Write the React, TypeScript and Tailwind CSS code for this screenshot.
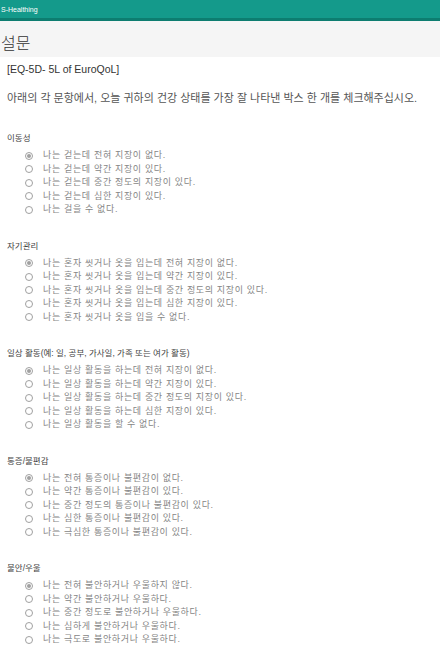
import React from "react";

interface Section {
  title: string;
  options: string[];
}

const sections: Section[] = [
  {
    title: "이동성",
    options: [
      "나는 걷는데 전혀 지장이 없다.",
      "나는 걷는데 약간 지장이 있다.",
      "나는 걷는데 중간 정도의 지장이 있다.",
      "나는 걷는데 심한 지장이 있다.",
      "나는 걸을 수 없다.",
    ],
  },
  {
    title: "자기관리",
    options: [
      "나는 혼자 씻거나 옷을 입는데 전혀 지장이 없다.",
      "나는 혼자 씻거나 옷을 입는데 약간 지장이 있다.",
      "나는 혼자 씻거나 옷을 입는데 중간 정도의 지장이 있다.",
      "나는 혼자 씻거나 옷을 입는데 심한 지장이 있다.",
      "나는 혼자 씻거나 옷을 입을 수 없다.",
    ],
  },
  {
    title: "일상 활동(예: 일, 공부, 가사일, 가족 또는 여가 활동)",
    options: [
      "나는 일상 활동을 하는데 전혀 지장이 없다.",
      "나는 일상 활동을 하는데 약간 지장이 있다.",
      "나는 일상 활동을 하는데 중간 정도의 지장이 있다.",
      "나는 일상 활동을 하는데 심한 지장이 있다.",
      "나는 일상 활동을 할 수 없다.",
    ],
  },
  {
    title: "통증/불편감",
    options: [
      "나는 전혀 통증이나 불편감이 없다.",
      "나는 약간 통증이나 불편감이 있다.",
      "나는 중간 정도의 통증이나 불편감이 있다.",
      "나는 심한 통증이나 불편감이 있다.",
      "나는 극심한 통증이나 불편감이 있다.",
    ],
  },
  {
    title: "불안/우울",
    options: [
      "나는 전혀 불안하거나 우울하지 않다.",
      "나는 약간 불안하거나 우울하다.",
      "나는 중간 정도로 불안하거나 우울하다.",
      "나는 심하게 불안하거나 우울하다.",
      "나는 극도로 불안하거나 우울하다.",
    ],
  },
];

function Radio({ checked }: { checked: boolean }) {
  return (
    <span className="flex h-[8px] w-[8px] shrink-0 items-center justify-center rounded-full border border-[#a0a0a0] bg-white">
      {checked && <span className="h-[4px] w-[4px] rounded-full bg-[#a0a0a0]" />}
    </span>
  );
}

export default function App() {
  return (
    <div
      className="min-h-[655px] w-[440px] overflow-hidden bg-white"
      style={{ fontFamily: '"Liberation Sans", "Noto Sans CJK KR", sans-serif' }}
    >
      <header className="h-[21px] border-b-[3px] border-[#0d7d70] bg-[#149a8b] pl-px pt-[6px] text-[7px] leading-[8px] text-white">
        S-Healthing
      </header>

      <div className="h-[36px] bg-[#f5f5f5] pl-[1px] pt-[13px] text-[16px] font-light leading-[20px] text-[#333]">
        설문
      </div>

      <div className="px-[7px]">
        <p className="mt-[5px] text-[10.5px] leading-[14px] text-[#333]">[EQ-5D- 5L of EuroQoL]</p>
        <p className="mt-[15px] whitespace-nowrap text-[11px] leading-[14px] text-[#555]">
          아래의 각 문항에서, 오늘 귀하의 건강 상태를 가장 잘 나타낸 박스 한 개를 체크해주십시오.
        </p>

        <div className="mt-[27px] flex flex-col gap-[23px]">
          {sections.map((s) => (
            <section key={s.title}>
              <h2 className="text-[8.5px] leading-[12px] text-[#444]">{s.title}</h2>
              <ul className="mt-[5px] flex flex-col pl-[18px]">
                {s.options.map((o, i) => (
                  <li
                    key={o}
                    className="flex h-[13.5px] items-center gap-[10px] text-[9px] tracking-[0.65px] text-[#858585]"
                  >
                    <Radio checked={i === 0} />
                    <span>{o}</span>
                  </li>
                ))}
              </ul>
            </section>
          ))}
        </div>
      </div>
    </div>
  );
}
